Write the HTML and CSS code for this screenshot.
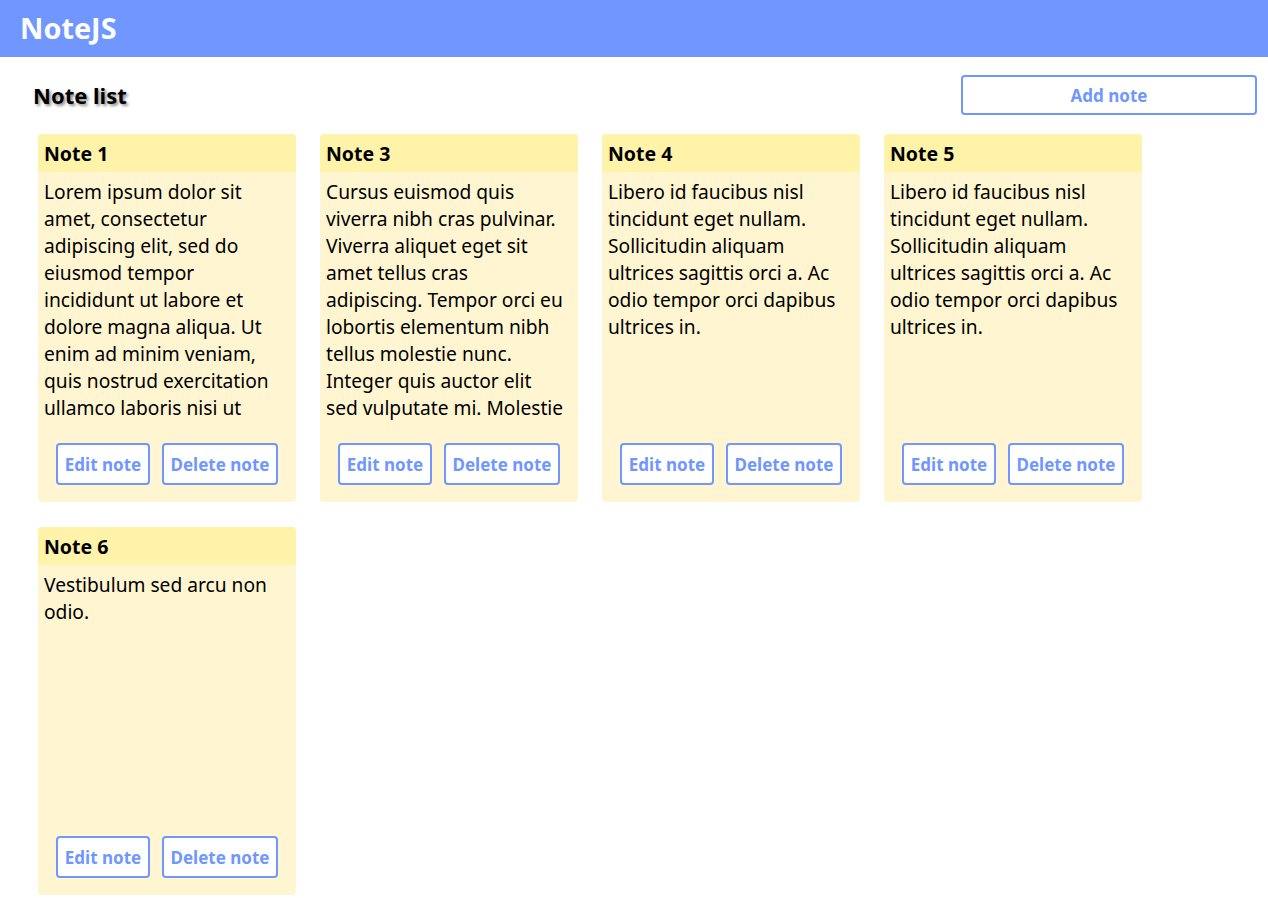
FILE: index.html
```html
<!DOCTYPE html>
<html>
<head>
<meta charset="utf-8">
<title>NoteJS</title>
<link rel="stylesheet" href="styles.css">
</head>
<body>
<header class="topbar"><span class="brand">NoteJS</span></header>
<main class="content">
  <div class="toolbar">
    <h2 class="list-title">Note list</h2>
    <button class="btn btn-add">Add note</button>
  </div>
  <div class="grid">
    <div class="card">
      <div class="card-head">Note 1</div>
      <p class="card-text">Lorem ipsum dolor sit amet, consectetur adipiscing elit, sed do eiusmod tempor incididunt ut labore et dolore magna aliqua. Ut enim ad minim veniam, quis nostrud exercitation ullamco laboris nisi ut aliquip ex ea commodo consequat.</p>
      <div class="card-actions"><button class="btn btn-edit">Edit note</button><button class="btn btn-del">Delete note</button></div>
    </div>
    <div class="card">
      <div class="card-head">Note 3</div>
      <p class="card-text">Cursus euismod quis viverra nibh cras pulvinar. Viverra aliquet eget sit amet tellus cras adipiscing. Tempor orci eu lobortis elementum nibh tellus molestie nunc. Integer quis auctor elit sed vulputate mi. Molestie at elementum eu facilisis sed odio morbi.</p>
      <div class="card-actions"><button class="btn btn-edit">Edit note</button><button class="btn btn-del">Delete note</button></div>
    </div>
    <div class="card">
      <div class="card-head">Note 4</div>
      <p class="card-text">Libero id faucibus nisl tincidunt eget nullam. Sollicitudin aliquam ultrices sagittis orci a. Ac odio tempor orci dapibus ultrices in.</p>
      <div class="card-actions"><button class="btn btn-edit">Edit note</button><button class="btn btn-del">Delete note</button></div>
    </div>
    <div class="card">
      <div class="card-head">Note 5</div>
      <p class="card-text">Libero id faucibus nisl tincidunt eget nullam. Sollicitudin aliquam ultrices sagittis orci a. Ac odio tempor orci dapibus ultrices in.</p>
      <div class="card-actions"><button class="btn btn-edit">Edit note</button><button class="btn btn-del">Delete note</button></div>
    </div>
    <div class="card">
      <div class="card-head">Note 6</div>
      <p class="card-text">Vestibulum sed arcu non odio.</p>
      <div class="card-actions"><button class="btn btn-edit">Edit note</button><button class="btn btn-del">Delete note</button></div>
    </div>
  </div>
</main>
</body>
</html>
```
FILE: styles.css
```css
* { box-sizing: border-box; }
html, body { margin: 0; padding: 0; background: #ffffff; }
body { font-family: "Noto Sans", "Open Sans", sans-serif; color: #000; }

.topbar {
  height: 57px;
  background: #7096ff;
  display: flex;
  align-items: center;
  padding-left: 20px;
}
.brand {
  color: #ffffff;
  font-weight: 700;
  font-size: 28.8px;
  line-height: 1;
}

.content { padding: 18px 11px 0 33px; }

.toolbar {
  display: flex;
  justify-content: space-between;
  align-items: center;
  height: 40px;
}
.list-title {
  margin: 0;
  font-size: 22px;
  font-weight: 700;
  text-shadow: 2px 2px 3px rgba(0,0,0,0.45);
}

.btn {
  font-family: "Noto Sans", "Open Sans", sans-serif;
  font-weight: 700;
  font-size: 17px;
  color: #7096ff;
  background: #ffffff;
  border: 2px solid #7096ff;
  border-radius: 4px;
  padding: 0;
  cursor: pointer;
}
.btn-add { width: 296px; height: 40px; }

.grid {
  display: grid;
  grid-template-columns: repeat(4, 258px);
  column-gap: 24px;
  row-gap: 25px;
  margin-top: 19px;
  margin-left: 5px;
}

.card {
  height: 368px;
  background: #fff6d1;
  border-radius: 4px;
  overflow: hidden;
  display: flex;
  flex-direction: column;
}
.card-head {
  height: 38px;
  background: #fff2a9;
  font-weight: 700;
  font-size: 19.5px;
  padding-left: 6px;
  display: flex;
  align-items: center;
}
.card-text {
  margin: 6px 14px 0 6px;
  font-size: 19.2px;
  line-height: 27px;
  height: 243px;
  overflow: hidden;
}
.card-actions {
  margin-top: auto;
  padding-bottom: 17px;
  display: flex;
  justify-content: center;
  gap: 12px;
}
.btn-edit { width: 94px; height: 42px; }
.btn-del { width: 116px; height: 42px; }
```
